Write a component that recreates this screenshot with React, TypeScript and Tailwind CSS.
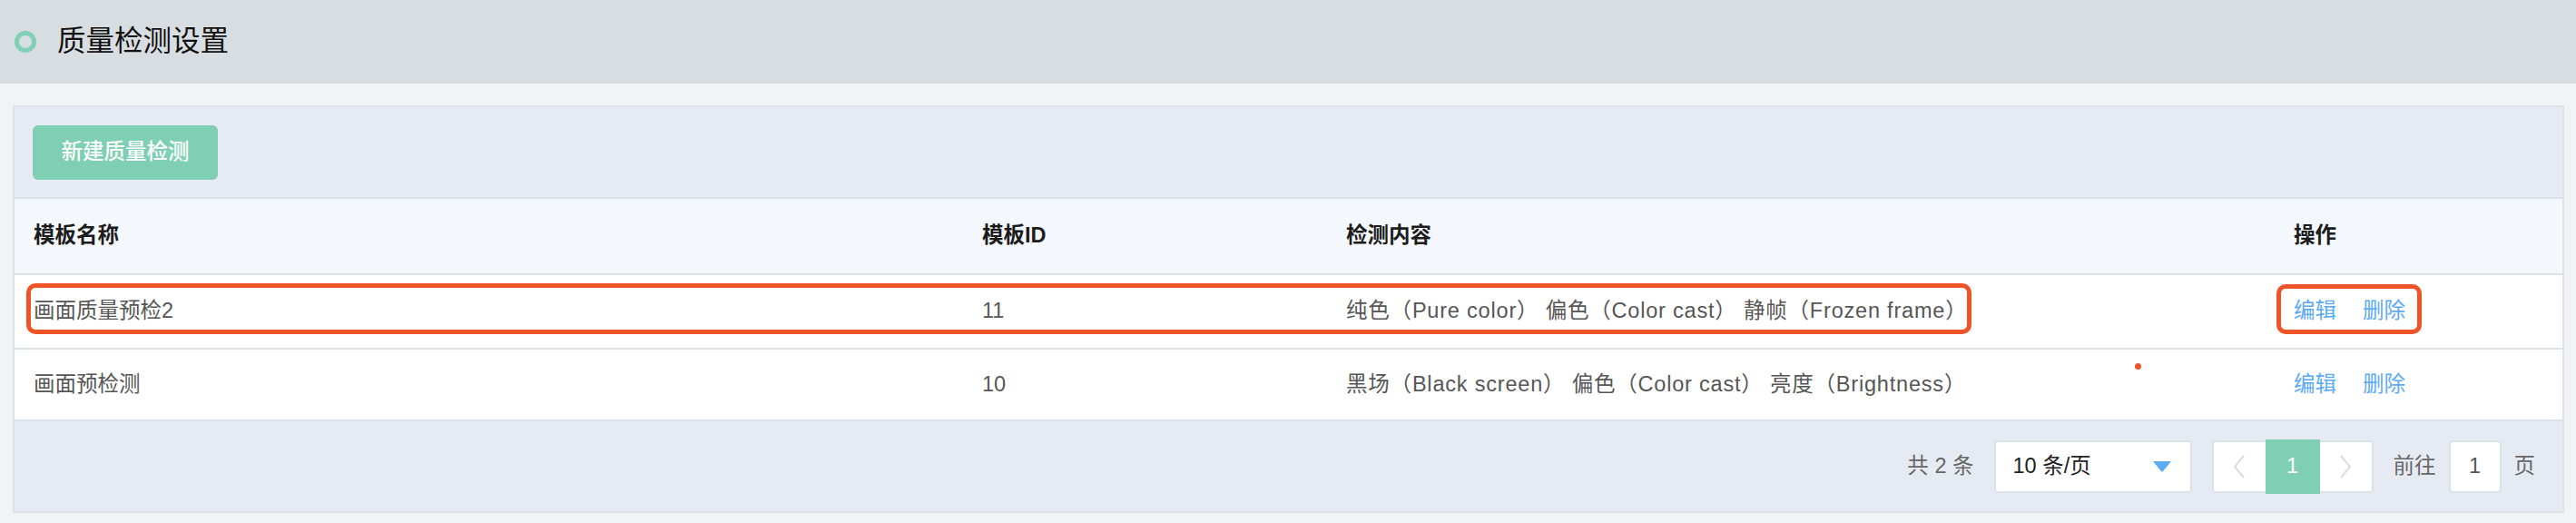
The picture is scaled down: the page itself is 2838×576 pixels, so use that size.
import React from 'react';

interface Template {
    name: string;
    id: number;
    content: string;
}

const templates: Template[] = [
    { name: '画面质量预检2', id: 11, content: '纯色（Pure color） 偏色（Color cast） 静帧（Frozen frame）' },
    { name: '画面预检测', id: 10, content: '黑场（Black screen） 偏色（Color cast） 亮度（Brightness）' },
];

const cols = 'grid grid-cols-[1045px_401px_1044px_1fr]';

function Chevron({ dir }: { dir: 'left' | 'right' }) {
    return (
        <svg width="14" height="28" viewBox="0 0 14 28" fill="none">
            <polyline
                points={dir === 'left' ? '12,2 2,14 12,26' : '2,2 12,14 2,26'}
                stroke="#dcdcdc"
                strokeWidth="2"
            />
        </svg>
    );
}

export default function App() {
    return (
        <div className="w-[2838px] h-[576px] bg-[#f2f3f5] font-['Liberation_Sans','Noto_Sans_CJK_SC',sans-serif] overflow-hidden">
            {/* Page title */}
            <div className="h-[92px] bg-[#d8dde1] flex items-center pl-[16px]">
                <span className="w-[24px] h-[24px] rounded-full border-[5px] border-[#7fd0b5]" />
                <h1 className="ml-[23px] text-[31.5px] leading-none text-[#111]">质量检测设置</h1>
            </div>

            <div className="pt-[24px] pl-[14px] pr-[13px]">
                <div className="border-2 border-[#dce2ea] bg-[#e6ebf3] text-[23.5px]">
                    {/* Toolbar */}
                    <div className="h-[99px] pt-[20px] pl-[20px]">
                        <button className="w-[204px] h-[60px] rounded-[6px] bg-[#7fcfb4] text-white font-medium">
                            新建质量检测
                        </button>
                    </div>

                    {/* Table head */}
                    <div className={`${cols} h-[84px] border-t-2 border-[#dce2ea] bg-[#f4f7fb] items-center font-bold text-[#1c1c1c]`}>
                        <div className="pl-[21px]">模板名称</div>
                        <div className="pl-[21px]">模板ID</div>
                        <div className="pl-[21px]">检测内容</div>
                        <div className="pl-[21px]">操作</div>
                    </div>

                    {/* Table rows */}
                    {templates.map((t, i) => (
                        <div
                            key={t.id}
                            className={`${cols} relative ${i === 0 ? 'h-[82px]' : 'h-[79px]'} border-t-2 border-[#dce2ea] bg-white items-center text-[#565656]`}
                        >
                            <div className="pl-[21px]">{t.name}</div>
                            <div className="pl-[21px]">{t.id}</div>
                            <div className="pl-[21px] whitespace-nowrap tracking-[0.8px]">{t.content}</div>
                            <div className="pl-[21px] flex gap-[29px] text-[#5aaaf5]">
                                <span>编辑</span>
                                <span>删除</span>
                            </div>

                            {i === 0 && (
                                <>
                                    <div className="absolute left-[13px] top-[9px] w-[2143px] h-[56px] rounded-[10px] border-[5px] border-[#ef5327]" />
                                    <div className="absolute left-[2492px] top-[10px] w-[160px] h-[55px] rounded-[10px] border-[5px] border-[#ef5327]" />
                                </>
                            )}
                            {i === 1 && (
                                <div className="absolute left-[2336px] top-[15px] w-[7px] h-[7px] rounded-full bg-[#ef5327]" />
                            )}
                        </div>
                    ))}

                    {/* Pagination */}
                    <div className="h-[101px] border-t-2 border-[#dce2ea] flex items-center justify-end pr-[30px] text-[#666]">
                        <span className="whitespace-pre">共 2 条</span>
                        <div className="ml-[22px] w-[218px] h-[58px] bg-white border-2 border-[#dce2ea] rounded-[4px] flex items-center justify-between pl-[19px] pr-[20px] text-[#222]">
                            <span>10 条/页</span>
                            <svg width="22" height="13" viewBox="0 0 22 13">
                                <path d="M1 1 H21 L12 12 Q11 13 10 12 Z" fill="#5aacf7" />
                            </svg>
                        </div>
                        <div className="ml-[22px] w-[178px] h-[58px] bg-white border-2 border-[#dce2ea] rounded-[4px] flex items-center">
                            <div className="w-[57px] flex justify-center">
                                <Chevron dir="left" />
                            </div>
                            <div className="w-[60px] h-[60px] bg-[#7fcfb4] text-white flex items-center justify-center">1</div>
                            <div className="flex-1 flex justify-center">
                                <Chevron dir="right" />
                            </div>
                        </div>
                        <span className="ml-[22px]">前往</span>
                        <div className="ml-[14px] w-[58px] h-[58px] bg-white border-2 border-[#dce2ea] rounded-[4px] flex items-center justify-center text-[#555]">
                            1
                        </div>
                        <span className="ml-[14px]">页</span>
                    </div>
                </div>
            </div>
        </div>
    );
}
